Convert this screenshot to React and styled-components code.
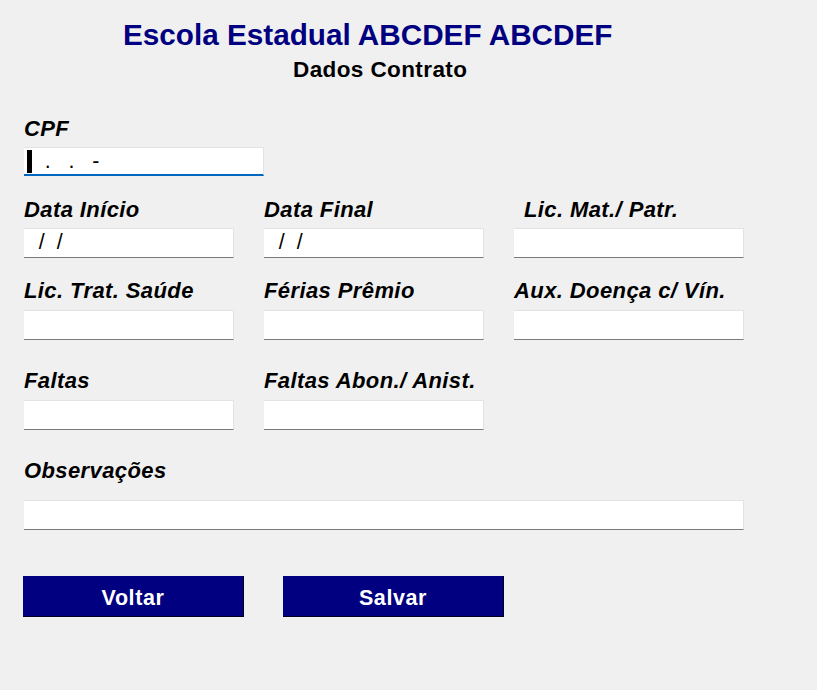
import React from "react";
import styled, { createGlobalStyle } from "styled-components";

const GlobalStyle = createGlobalStyle`
	html, body {
		margin: 0;
		padding: 0;
		background: #f0f0f0;
	}
	body {
		font-family: "Liberation Sans", Arial, sans-serif;
	}
`;

const Window = styled.div`
	width: 817px;
	height: 690px;
	background: #f0f0f0;
	display: flex;
	flex-direction: column;
	padding-top: 18px;
	box-sizing: border-box;
`;

const Title = styled.h1`
	margin: 0 0 0 123px;
	font-size: 29.7px;
	line-height: 34px;
	font-weight: bold;
	color: #000080;
`;

const Subtitle = styled.h2`
	margin: 5px 0 0 293px;
	font-size: 22.5px;
	line-height: 26px;
	font-weight: bold;
	letter-spacing: 0.4px;
	color: #000;
`;

const Form = styled.div`
	display: flex;
	flex-direction: column;
	padding-left: 24px;
`;

const Row = styled.div`
	margin-top: ${props => props.$top}px;
	display: grid;
	grid-template-columns: ${props => props.$cols || "210px 220px 230px"};
	column-gap: 30px;
`;

const Field = styled.div`
	display: flex;
	flex-direction: column;
`;

const Label = styled.label`
	font-size: 22px;
	line-height: 24px;
	font-weight: bold;
	font-style: italic;
	letter-spacing: 0.4px;
	color: #000;
	padding-left: ${props => props.$indent || 0}px;
	margin-bottom: ${props => (props.$gap ? props.$gap : 7)}px;
	white-space: nowrap;
`;

const TextBox = styled.div`
	position: relative;
	box-sizing: border-box;
	height: ${props => (props.$focused ? 29 : 30)}px;
	background: #fff;
	border-top: 1px solid #e3e3e3;
	border-right: 1px solid #e3e3e3;
	border-bottom: ${props =>
		props.$focused ? "2px solid #0067c0" : "1px solid #7a7a7a"};
	padding-left: 3px;
	font-size: 21.33px;
	line-height: 27px;
	color: #000;
	white-space: pre;
	overflow: hidden;
`;

const Caret = styled.span`
	position: absolute;
	left: 3px;
	top: 2px;
	width: 5px;
	height: 23px;
	background: #000;
`;

const Buttons = styled.div`
	margin-top: 46px;
	padding-left: 23px;
	display: flex;
	gap: 39px;
`;

const Button = styled.button`
	width: 221px;
	height: 41px;
	box-sizing: border-box;
	background: #000080;
	color: #fff;
	border: none;
	border-right: 1px solid #000020;
	border-bottom: 1px solid #000020;
	font-family: "Liberation Sans", Arial, sans-serif;
	font-size: 21.5px;
	font-weight: bold;
	letter-spacing: 0.6px;
	padding: 4px 0 0;
	cursor: pointer;
`;

function App() {
	return (
		<Window>
			<GlobalStyle />
			<Title>Escola Estadual ABCDEF ABCDEF</Title>
			<Subtitle>Dados Contrato</Subtitle>
			<Form>
				<Row $top={34} $cols="240px">
					<Field>
						<Label $gap={6}>CPF</Label>
						<TextBox $focused>
							<Caret />
							{"   .   .   -"}
						</TextBox>
					</Field>
				</Row>
				<Row $top={22}>
					<Field>
						<Label $gap={6}>Data Início</Label>
						<TextBox>{"  /  /"}</TextBox>
					</Field>
					<Field>
						<Label $gap={6}>Data Final</Label>
						<TextBox>{"  /  /"}</TextBox>
					</Field>
					<Field>
						<Label $gap={6} $indent={10}>
							Lic. Mat./ Patr.
						</Label>
						<TextBox />
					</Field>
				</Row>
				<Row $top={21}>
					<Field>
						<Label>Lic. Trat. Saúde</Label>
						<TextBox />
					</Field>
					<Field>
						<Label>Férias Prêmio</Label>
						<TextBox />
					</Field>
					<Field>
						<Label>Aux. Doença c/ Vín.</Label>
						<TextBox />
					</Field>
				</Row>
				<Row $top={29}>
					<Field>
						<Label>Faltas</Label>
						<TextBox />
					</Field>
					<Field>
						<Label>Faltas Abon./ Anist.</Label>
						<TextBox />
					</Field>
				</Row>
				<Row $top={29} $cols="720px">
					<Field>
						<Label $gap={17}>Observações</Label>
						<TextBox />
					</Field>
				</Row>
			</Form>
			<Buttons>
				<Button>Voltar</Button>
				<Button>Salvar</Button>
			</Buttons>
		</Window>
	);
}

export default App;
